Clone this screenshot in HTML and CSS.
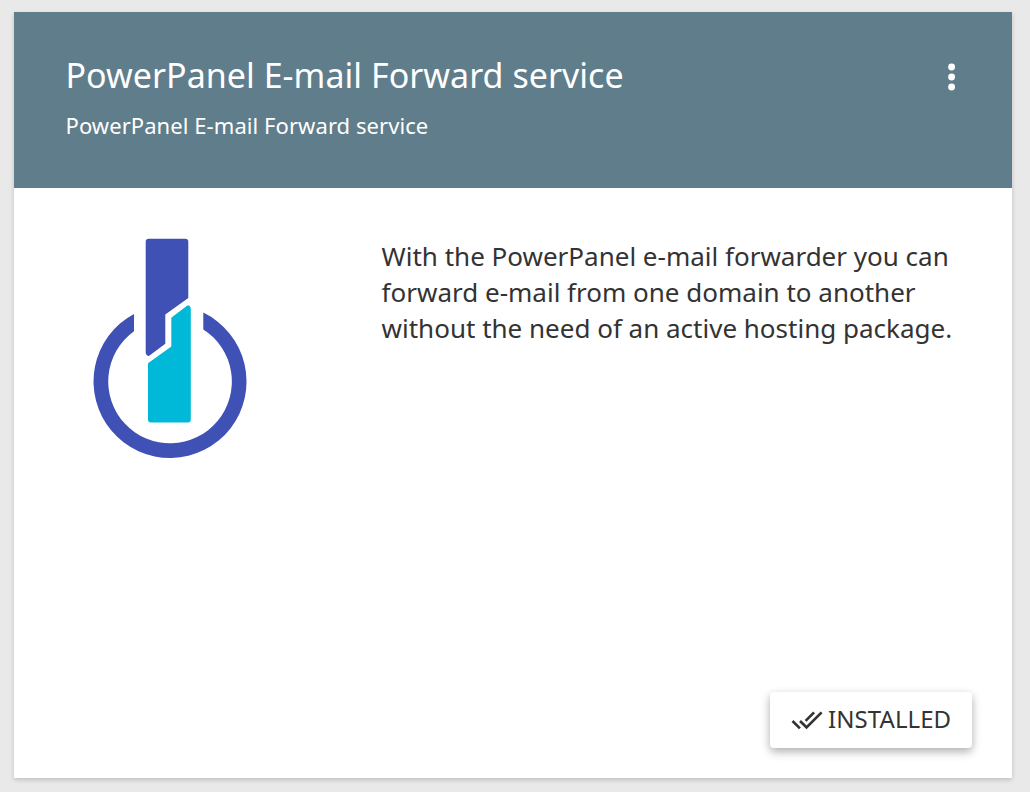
FILE: index.html
```html
<!DOCTYPE html>
<html lang="en">
<head>
<meta charset="utf-8">
<title>PowerPanel E-mail Forward service</title>
<link rel="stylesheet" href="styles.css">
</head>
<body>
<article class="card">
  <header class="card-header">
    <div class="headings">
      <h1 class="title">PowerPanel E-mail Forward service</h1>
      <p class="subtitle">PowerPanel E-mail Forward service</p>
    </div>
    <button class="menu" aria-label="More">
      <svg class="menu-icon" viewBox="0 0 8 28"><circle cx="3.6" cy="4" r="3.45"/><circle cx="3.6" cy="14" r="3.45"/><circle cx="3.6" cy="24" r="3.45"/></svg>
    </button>
  </header>
  <div class="card-body">
    <svg class="logo" viewBox="80 230 180 236" aria-hidden="true">
      <path fill="#3f51b5" d="M134 314A76.5 76.5 0 1 0 203.3 312.6V329.4A61.8 61.8 0 1 1 134 331.3Z"/>
      <path fill="#3f51b5" d="M148.7 238.7H185.3Q188.3 238.7 188.3 241.7V298L165.3 314.6V343.8L149.6 355.6Q148.4 356.5 147.2 355.6Q145.7 354.4 145.7 352.5V241.7Q145.7 238.7 148.7 238.7Z"/>
      <path fill="#00b8d7" d="M171.3 317.8L187 305.8Q188.4 304.8 189.4 305.8Q190.8 307 190.8 309V419.6Q190.8 422.6 187.8 422.6H151Q148 422.6 148 419.6V363.3L171.3 346.6Z"/>
    </svg>
    <p class="description">With the PowerPanel e-mail forwarder you can forward e-mail from one domain to another without the need of an active hosting package.</p>
  </div>
  <footer class="card-footer">
    <button class="installed">
      <svg class="check-icon" viewBox="0 0 24 24"><path d="M18 7l-1.41-1.41-6.34 6.34 1.41 1.41L18 7zm4.24-1.41L11.66 16.17 7.48 12l-1.41 1.41L11.66 19l12-12-1.42-1.41zM.41 13.41L6 19l1.41-1.41L1.83 12 .41 13.41z"/></svg>
      <span class="installed-label">INSTALLED</span>
    </button>
  </footer>
</article>
</body>
</html>
```

FILE: styles.css
```css
* { box-sizing: border-box; }
body {
  margin: 0;
  height: 792px;
  padding: 12px 18px 14px 14px;
  background: #e9e9e9;
  color: #333;
  font-family: "Noto Sans", sans-serif;
}
h1, p { margin: 0; font-weight: 400; }
button { border: 0; padding: 0; font: inherit; color: inherit; background: none; }
.card {
  display: flex;
  flex-direction: column;
  height: 766px;
  background: #fff;
  box-shadow: 0 2px 4px rgba(0, 0, 0, .12), 0 2px 6px rgba(0, 0, 0, .06);
}
.card-header {
  display: flex;
  justify-content: space-between;
  align-items: flex-start;
  height: 176px;
  padding: 38px 56px 0 51.5px;
  background: #607d8b;
  color: #fff;
}
.title { font-size: 34px; line-height: 50px; letter-spacing: .03px; white-space: nowrap; }
.subtitle { margin-top: 10px; font-size: 22px; line-height: 30px; letter-spacing: .07px; white-space: nowrap; }
.menu { display: flex; margin-top: 13px; }
.menu-icon { width: 8px; height: 28px; fill: #fff; }
.card-body {
  display: flex;
  flex: 1;
  gap: 121.6px;
  padding: 42px 40px 0 66px;
}
.logo { flex: none; width: 180px; height: 236px; }
.description { width: 590px; padding-top: 8px; font-size: 26px; line-height: 36px; }
.card-footer { display: flex; justify-content: flex-end; padding: 0 40px 30px; }
.installed {
  display: flex;
  align-items: center;
  gap: 5.5px;
  width: 202px;
  height: 56px;
  padding-left: 20.6px;
  border-radius: 4px;
  background: #fff;
  box-shadow: 0 4px 10px rgba(0, 0, 0, .26), 0 2px 8px rgba(0, 0, 0, .08);
  font-size: 24px;
  line-height: 36px;
}
.installed-label { padding-bottom: 2px; letter-spacing: .05px; }
.check-icon { width: 32px; height: 32px; fill: #333; }
```
